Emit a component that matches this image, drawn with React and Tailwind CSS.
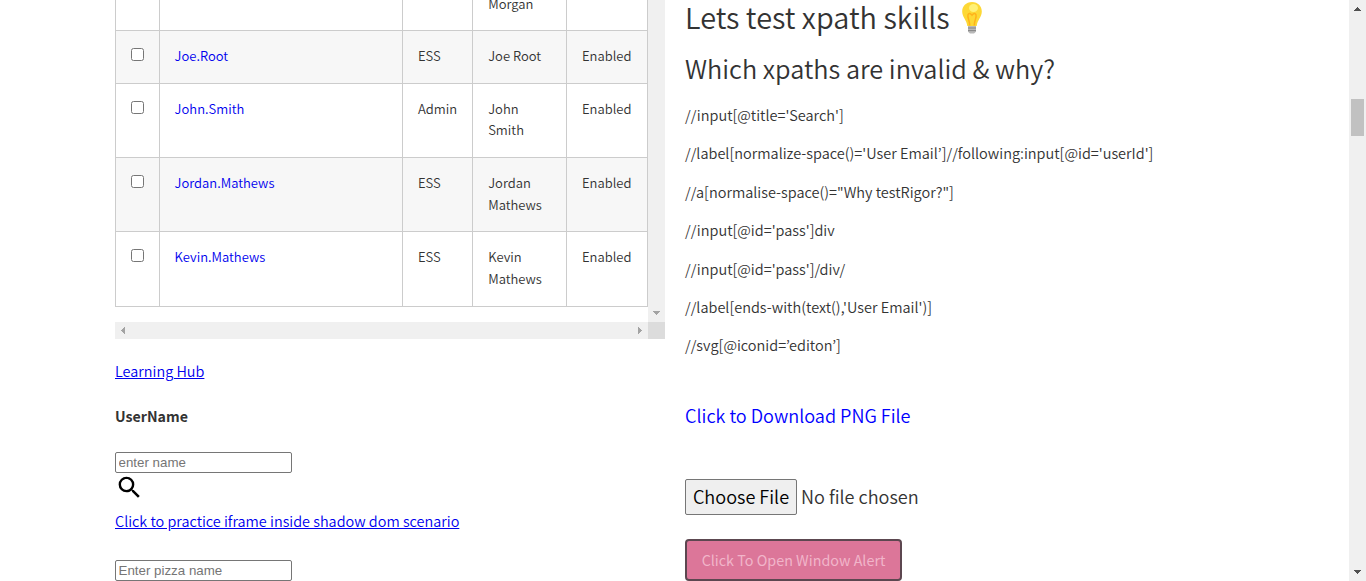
import React from "react";

const rows = [
  { user: "", role: "", name: ["Morgan"], status: "", height: "h-[31px]", shade: "", clipped: true },
  { user: "Joe.Root", role: "ESS", name: ["Joe Root"], status: "Enabled", height: "h-[53px]", shade: "bg-[#f7f7f7]" },
  { user: "John.Smith", role: "Admin", name: ["John", "Smith"], status: "Enabled", height: "h-[74px] leading-[21px]", shade: "" },
  { user: "Jordan.Mathews", role: "ESS", name: ["Jordan", "Mathews"], status: "Enabled", height: "h-[74px]", shade: "bg-[#f7f7f7]" },
  { user: "Kevin.Mathews", role: "ESS", name: ["Kevin", "Mathews"], status: "Enabled", height: "h-[75px]", shade: "" },
];

const xpaths = [
  "//input[@title='Search']",
  "//label[normalize-space()='User Email’]//following:input[@id='userId']",
  '//a[normalise-space()="Why testRigor?"]',
  "//input[@id='pass']div",
  "//input[@id='pass']/div/",
  "//label[ends-with(text(),'User Email')]",
  "//svg[@iconid=’editon’]",
];

function Bulb() {
  return (
    <svg className="h-[34px] w-6 shrink-0" viewBox="0 0 24 34" aria-hidden="true">
      <path d="M8 24.5h8v6.2l-2 1.8h-4l-2-1.8z" fill="#b9b9b9" />
      <path d="M8 27h8M8 29.6h8" stroke="#858585" strokeWidth="1" />
      <path d="M12 1C5.9 1 2.2 5.300 2.200 10.500C2.200 16.300 6.600 18.600 7.300 25H16.700C17.400 18.600 21.800 16.300 21.800 10.500C21.800 5.300 18.100 1 12 1Z" fill="#fdd835" />
      <path d="M9.700 24.500C9.600 19 7.200 16.500 8 13.700c.7-2 2.700-1.600 4 .5 1.300-2.100 3.300-2.500 4-.5.8 2.800-1.600 5.300-1.700 10.800" fill="none" stroke="#ffb21a" strokeWidth="1.500" />
      <ellipse cx="13.500" cy="7" rx="4.500" ry="4" fill="#fff176" />
    </svg>
  );
}

function Arrow({ d, box, size, color }) {
  return (
    <svg className={size} viewBox={box} shapeRendering="crispEdges" aria-hidden="true">
      <path d={d} fill={color} />
    </svg>
  );
}

function UsersTable() {
  return (
    <div className="flex h-[339px] w-[550px] flex-col">
      <div className="flex h-[322px]">
        <div className="h-[307px] w-[533px] border-l border-[#ccc] text-[13px] leading-[21.6px] font-[350]">
          {rows.map((r, i) => (
            <div key={i} className={`grid grid-cols-[44px_243px_70px_94px_81px] ${r.height} ${r.shade}`}>
              <div className="border-r border-b border-[#ccc] pt-[17px] pl-[15px]">
                {!r.clipped && <input type="checkbox" className="m-0 block size-[13px]" />}
              </div>
              <div className="border-r border-b border-[#ccc] pt-[14px] pl-[14.6px] text-[#0000ee]">{r.user}</div>
              <div className="border-r border-b border-[#ccc] pt-[14px] pl-[15px]">{r.role}</div>
              <div className={`border-r border-b border-[#ccc] pl-[15.2px] ${r.clipped ? "-mt-[7px]" : "pt-[14px]"}`}>
                {r.name.map((n) => (
                  <div key={n}>{n}</div>
                ))}
              </div>
              <div className="border-r border-b border-[#ccc] pt-[14px] pl-[15px]">{r.status}</div>
            </div>
          ))}
        </div>
        <div className="flex w-[17px] flex-col items-center justify-end bg-[#f0f0f0] pb-[7px]">
          <Arrow size="h-1 w-[7px]" box="0 0 7 4" d="M0 0h7v1h-1v1h-1v1h-1v1h-1v-1h-1v-1h-1v-1h-1z" color="#a3a3a3" />
        </div>
      </div>
      <div className="flex h-[17px]">
        <div className="flex w-[533px] items-center justify-between bg-[#f0f0f0] px-[6px]">
          <Arrow size="h-[7px] w-1" box="0 0 4 7" d="M4 0v7h-1v-1h-1v-1h-1v-1h-1v-1h1v-1h1v-1h1v-1z" color="#a3a3a3" />
          <Arrow size="h-[7px] w-1" box="0 0 4 7" d="M0 0v7h1v-1h1v-1h1v-1h1v-1h-1v-1h-1v-1h-1v-1z" color="#a3a3a3" />
        </div>
        <div className="w-[17px] bg-[#dcdcdc]" />
      </div>
    </div>
  );
}

function TextField({ placeholder }) {
  return (
    <input
      type="text"
      placeholder={placeholder}
      className="block h-[21px] w-[177px] rounded-[2px] border border-[#767676] bg-white py-px pr-[2px] pl-[2.5px] font-['Liberation_Sans',Arial,sans-serif] text-[13.333px] leading-[15px] placeholder:text-[#757575]"
    />
  );
}

export default function App() {
  return (
    <div className="flex h-[581px] w-[1366px] overflow-hidden bg-white font-['Noto_Sans_CJK_KR',sans-serif] whitespace-nowrap text-[#333]">
      <main className="flex w-[1349px] gap-5 pl-[115px]">
        <section className="w-[550px]">
          <UsersTable />
          <a className="mt-[20px] block h-6 text-[14.45px] leading-6 font-[350] text-[#0000ee] underline">Learning Hub</a>
          <div className="mt-[21px] h-6 text-[14.2px] leading-6 font-bold">UserName</div>
          <div className="mt-[24px]">
            <TextField placeholder="enter name" />
          </div>
          <svg className="block h-[29px] w-[29px]" viewBox="0 0 24 24" aria-hidden="true">
            <path d="M15.5 14h-.79l-.28-.27A6.471 6.471 0 0 0 16 9.500 6.500 6.500 0 1 0 9.500 16c1.610 0 3.090-.59 4.230-1.570l.27.28v.79l5 4.990L20.490 19l-4.990-5zm-6 0C7.010 14 5 11.990 5 9.500S7.010 5 9.500 5 14 7.010 14 9.500 11.990 14 9.500 14z" fill="#000" />
          </svg>
          <a className="mt-[7px] block h-6 text-[14.45px] leading-6 font-[350] text-[#0000ee] underline">Click to practice iframe inside shadow dom scenario</a>
          <div className="mt-[27px]">
            <TextField placeholder="Enter pizza name" />
          </div>
        </section>
        <section className="w-[550px]">
          <h1 className="flex h-[36px] items-start text-[28.9px] leading-[32px] font-[350]">
            Lets test xpath skills
            <span className="mt-px ml-[10px] flex">
              <Bulb />
            </span>
          </h1>
          <h2 className="mt-[13px] h-[38px] text-[25.3px] leading-[38px] font-[350]">Which xpaths are invalid &amp; why?</h2>
          <ul className="mt-[9px]">
            {xpaths.map((x) => (
              <li key={x} className="h-[38.4px] text-[14.5px] leading-[38.4px] font-[350]">{x}</li>
            ))}
          </ul>
          <a className="mt-[35px] block h-[30px] text-[18.1px] leading-[30px] font-[350] text-[#0000ff]">Click to Download PNG File</a>
          <div className="mt-[49px] flex h-9 items-center text-[18.1px] font-[350]">
            <button className="h-9 w-[112px] rounded-[2px] border border-[#767676] bg-[#efefef] text-black">Choose File</button>
            <span className="ml-1">No file chosen</span>
          </div>
          <button className="mt-6 block h-[42px] w-[217px] rounded-[4px] border-2 border-[#5c4750] bg-[#dc7699] pt-px text-[14.35px] text-[#f1b5ca]">
            Click To Open Window Alert
          </button>
        </section>
      </main>
      <aside className="flex w-[17px] flex-col items-center bg-[#f0f0f0] pt-[7px] pb-[7px]">
        <Arrow size="h-1 w-[7px]" box="0 0 7 4" d="M0 4h7v-1h-1v-1h-1v-1h-1v-1h-1v1h-1v1h-1v1h-1z" color="#505050" />
        <div className="mt-[88px] h-[37px] w-[13px] bg-[#c1c1c1]" />
        <div className="mt-auto">
          <Arrow size="block h-1 w-[7px]" box="0 0 7 4" d="M0 0h7v1h-1v1h-1v1h-1v1h-1v-1h-1v-1h-1v-1h-1z" color="#505050" />
        </div>
      </aside>
    </div>
  );
}
